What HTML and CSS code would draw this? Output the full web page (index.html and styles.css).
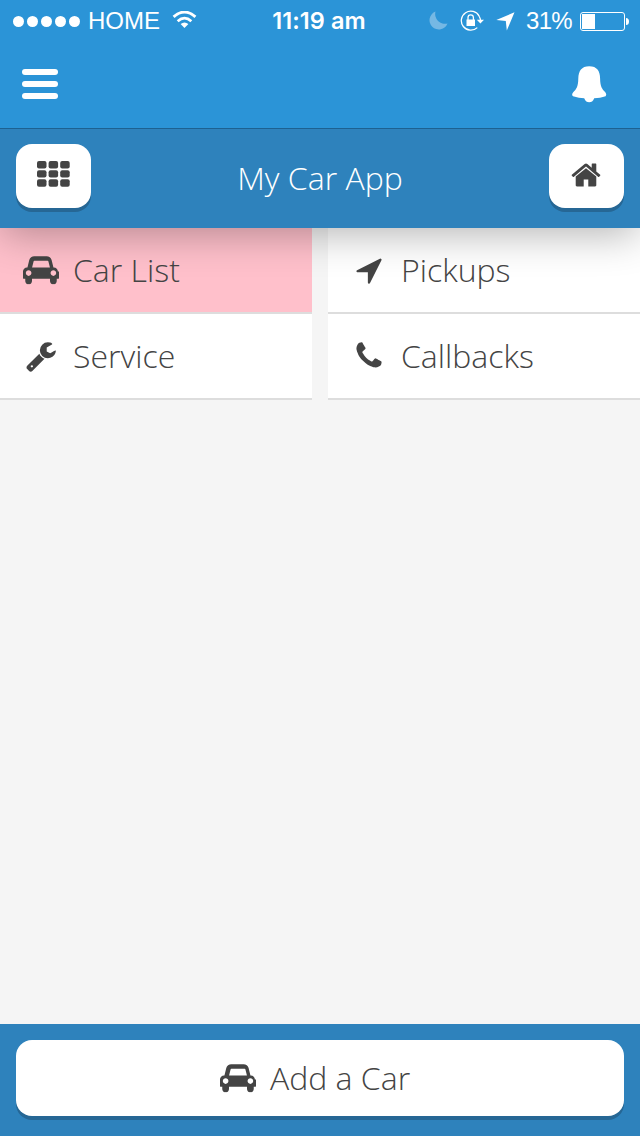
FILE: index.html
```html
<!DOCTYPE html>
<html lang="en">
<head>
<meta charset="utf-8">
<title>My Car App</title>
<link rel="stylesheet" href="styles.css">
</head>
<body>
<svg class="defs" aria-hidden="true">
  <symbol id="car" viewBox="0 128 2048 1600"><path d="M480 1088q0-66-47-113t-113-47-113 47-47 113 47 113 113 47 113-47 47-113zm36-320h1016l-89-357q-2-8-14-17.500t-21-9.500h-768q-9 0-21 9.500t-14 17.500zm1372 320q0-66-47-113t-113-47-113 47-47 113 47 113 113 47 113-47 47-113zm160-96v384q0 14-9 23t-23 9h-96v128q0 80-56 136t-136 56-136-56-56-136v-128h-1024v128q0 80-56 136t-136 56-136-56-56-136v-128h-96q-14 0-23-9t-9-23v-384q0-93 65.500-158.500t158.500-65.500h28l105-419q23-94 104-157.500t179-63.500h704q98 0 179 63.500t104 157.500l105 419h28q93 0 158.500 65.500t65.500 158.500z"/></symbol>
</svg>
<div class="screen">
  <header class="navbar">
    <div class="status">
      <div class="status-left">
        <span class="signal"><i></i><i></i><i></i><i></i><i></i></span>
        <span class="carrier">HOME</span>
        <svg class="wifi" width="25" height="19" viewBox="0 0 26 20"><path d="M1.500 6.200Q13-4 24.500 6.200" fill="none" stroke="#fff" stroke-width="3"/><path d="M5.800 10.700Q13 4.300 20.200 10.700" fill="none" stroke="#fff" stroke-width="2.900"/><path d="M8.900 13.800Q13 10.400 17.100 13.800L13 18Z" fill="#fff"/></svg>
      </div>
      <div class="clock">11:19 am</div>
      <div class="status-right">
        <svg class="moon" width="19" height="19" viewBox="0 0 19 19"><path d="M6.500.5A9.300 9.300 0 1 0 18.500 12.500A9.800 9.800 0 0 1 6.500.5Z" fill="#75b8e4"/></svg>
        <svg class="lock" width="24" height="22" viewBox="0 0 24 22"><path d="M19.200 6.200A9.500 9.500 0 1 0 17.300 17.600M19.200 6.200Q20.500 8.500 20.500 11" fill="none" stroke="#fff" stroke-width="1.300"/><path d="M16.800 9.700H24L20.400 13.500ZM6.500 9.500H15V16H6.500Z" fill="#fff"/><path d="M8 10V7.500a2.700 2.700 0 0 1 5.400 0V10" fill="none" stroke="#fff" stroke-width="1.300"/></svg>
        <svg class="gps" width="19" height="19" viewBox="0 0 19 19"><path d="M18.500.3L10.800 18.500L9.800 8.900L.3 8Z" fill="#fff"/></svg>
        <span class="percent">31%</span>
        <svg class="battery" width="49" height="19" viewBox="0 0 49 19"><rect x=".5" y=".5" width="44" height="18" rx="2.500" fill="none" stroke="#fff"/><path d="M2 2h13v15H2ZM46 6q3 0 3 3.500T46 13Z" fill="#fff"/></svg>
      </div>
    </div>
    <div class="nav-actions">
      <span class="menu"><i></i><i></i><i></i></span>
      <svg class="bell" width="35" height="37" viewBox="0 0 35 37"><path d="M17.200.2C9.500.2 6.500 5 6.300 12.500C6.200 20.500 4.500 23 1.200 26.300Q-.8 28.500 1 30.300C5 31.500 9 32.200 12.200 32.300C13.500 35.500 15 36.200 17.200 36.200S21 35.500 22.200 32.300C26 32.200 30 31.500 33.600 30.300Q35 28.500 33.300 26.300C30 23 28.200 20.500 28.100 12.500C28 5 25 .2 17.200.2Z" fill="#fff"/></svg>
    </div>
  </header>
  <div class="titlebar">
    <button class="button square" aria-label="Grid">
      <svg width="33" height="26" viewBox="0 0 33 26"><g><rect width="9.500" height="7.400" rx="2"/><rect x="11.600" width="9.500" height="7.400" rx="2"/><rect x="23.200" width="9.500" height="7.400" rx="2"/><rect y="9.200" width="9.500" height="7.400" rx="2"/><rect x="11.600" y="9.200" width="9.500" height="7.400" rx="2"/><rect x="23.200" y="9.200" width="9.500" height="7.400" rx="2"/><rect y="18.300" width="9.500" height="7.400" rx="2"/><rect x="11.600" y="18.300" width="9.500" height="7.400" rx="2"/><rect x="23.200" y="18.300" width="9.500" height="7.400" rx="2"/></g></svg>
    </button>
    <h1>My Car App</h1>
    <button class="button square" aria-label="Home">
      <svg class="home" width="32" height="32" viewBox="0 0 1792 1792"><path d="M1472 992v480q0 26-19 45t-45 19h-384v-384h-256v384h-384q-26 0-45-19t-19-45v-480q0-1 .5-3t.5-3l575-474 575 474q1 2 1 6zm223-69l-62 74q-8 9-21 11h-3q-13 0-21-7l-692-577-692 577q-12 8-24 7-13-2-21-11l-62-74q-8-10-7-23.500t11-21.500l719-599q32-26 76-26t76 26l244 204v-195q0-14 9-23t23-9h192q14 0 23 9t9 23v408l219 182q10 8 11 21.500t-7 23.500z"/></svg>
    </button>
  </div>
  <main class="content">
    <nav class="grid">
      <a class="item active"><span class="icon"><svg class="car" width="36" height="28.600"><use href="#car"/></svg></span><span class="label">Car List</span></a>
      <a class="item"><span class="icon"><svg width="32" height="32" viewBox="0 0 1792 1792"><path d="M1593 349l-640 1280q-17 35-57 35-5 0-15-2-22-5-35.500-22.500t-13.500-39.500v-576h-576q-22 0-39.500-13.500t-22.500-35.500 4-42 29-30l1280-640q13-7 29-7 27 0 45 19 15 14 18.500 34.500t-6.500 39.500z"/></svg></span><span class="label">Pickups</span></a>
      <a class="item"><span class="icon"><svg width="32" height="32" viewBox="0 0 1792 1792"><path d="M448 1472q0-26-19-45t-45-19-45 19-19 45 19 45 45 19 45-19 19-45zm644-420l-682 682q-37 37-90 37-52 0-91-37l-106-108q-38-36-38-90 0-53 38-91l681-681q39 98 114.500 173.500t173.500 114.500zm634-435q0 39-23 106-47 134-164.500 217.500t-258.500 83.500q-185 0-316.500-131.500t-131.500-316.500 131.500-316.500 316.500-131.500q58 0 121.500 16.500t107.500 46.500q16 11 16 28t-16 28l-293 169v224l193 107q5-3 79-48.500t135.500-81 70.500-35.500q15 0 23.500 10t8.500 25z"/></svg></span><span class="label">Service</span></a>
      <a class="item"><span class="icon"><svg width="32" height="32" viewBox="0 0 1792 1792"><path d="M1600 1240q0 27-10 70.500t-21 68.500q-21 50-122 106-94 51-186 51-27 0-52.500-3.500t-57.500-12.500-47.500-14.500-55.500-20.500-49-18q-98-35-175-83-128-79-264.500-215.500t-215.500-264.500q-48-77-83-175-3-9-18-49t-20.500-55.500-14.500-47.500-12.500-57.500-3.500-52.500q0-92 51-186 56-101 106-122 25-11 68.500-21t70.500-10q14 0 21 3 18 6 53 76 11 19 30 54t35 63.500 31 53.500q3 4 17.500 25t21.500 35.500 7 28.500q0 20-28.500 50t-62 55-62 53-28.500 46q0 9 5 22.500t8.500 20.500 14 24 11.500 19q76 137 174 235t235 174q2 1 19 11.500t24 14 20.500 8.500 22.500 5q18 0 46-28.500t53-62 55-62 50-28.500q14 0 28.500 7t35.500 21.500 25 17.500q25 15 53.500 31t63.500 35 54 30q70 35 76 53 3 7 3 21z"/></svg></span><span class="label">Callbacks</span></a>
    </nav>
  </main>
  <footer class="footer">
    <button class="button wide"><svg class="car" width="36" height="28.600"><use href="#car"/></svg><span class="label">Add a Car</span></button>
  </footer>
</div>
</body>
</html>
```
FILE: styles.css
```css
* { box-sizing: border-box; }
body {
  margin: 0;
  font-family: "Open Sans", sans-serif;
  font-weight: 300;
  font-size: 32px;
  color: #444;
}
svg { display: block; flex: none; fill: #444; }
.defs { display: none; }
.screen {
  display: flex;
  flex-direction: column;
  height: 1136px;
  background: #f5f5f5;
}

.navbar {
  position: relative;
  z-index: 2;
  height: 129px;
  background: #2b94d7;
  border-bottom: 1px solid #1d6191;
}
.status {
  display: grid;
  grid-template-columns: 1fr auto 1fr;
  height: 41px;
  padding: 0 11px 0 13px;
  font: 400 24px/41px "Liberation Sans", sans-serif;
  color: #fff;
}
.status-left, .status-right { display: flex; align-items: center; }
.status-right { justify-content: flex-end; margin-right: 0; }
.signal { display: flex; gap: 3px; margin-right: 8px; }
.signal i { width: 11px; height: 11px; border-radius: 50%; background: #fff; }
.carrier { width: 84px; padding-bottom: 1px; }
.wifi { margin-bottom: 1px; }
.clock {
  margin-right: 4px;
  font: 600 23.500px/42px Inter, "Liberation Sans", sans-serif;
  letter-spacing: .1px;
}
.moon { margin: 0 12px 1px 0; }
.lock { margin: 0 12px 1px 0; }
.gps { margin-right: 11px; }
.percent { letter-spacing: -.7px; margin-right: 8px; padding-bottom: 1px; }
.nav-actions {
  display: flex;
  justify-content: space-between;
  align-items: center;
  height: 86px;
  padding: 0 33px 0 22px;
}
.menu { display: grid; gap: 6px; }
.menu i { width: 36px; height: 6px; border-radius: 3px; background: #fff; }
.bell { margin-top: 1px; }

.titlebar {
  position: relative;
  z-index: 1;
  display: flex;
  justify-content: space-between;
  align-items: flex-start;
  height: 99px;
  padding: 15px 16px 0;
  background: #2e82bc;
  box-shadow: 0 8px 40px -2px rgba(0, 0, 0, .3);
}
h1 { margin: 0; font-size: 32px; font-weight: 300; line-height: 68px; color: #fff; }
.button {
  display: flex;
  justify-content: center;
  align-items: center;
  border: 0;
  border-radius: 16px;
  background: #fff;
  box-shadow: 0 4px 0 #266795;
  font: inherit;
  color: #444;
}
.square { width: 75px; height: 64px; padding: 0 0 4px; }
.home { margin-top: 1px; }

.content { flex: 1; }
.grid { display: grid; grid-template-columns: 312px 312px; column-gap: 16px; }
.item {
  display: flex;
  align-items: center;
  height: 86px;
  padding-left: 20px;
  border-bottom: 2px solid #ddd;
  background: #fff;
}
.active { background: #ffc0cb; }
.icon { display: flex; justify-content: center; width: 41px; margin-right: 12px; }
.car { margin-top: 1px; }
.label { padding-bottom: 2px; }

.footer { height: 112px; padding: 16px; background: #2e82bc; }
.wide { width: 100%; height: 76px; gap: 14px; padding: 0 10px 0 0; }
```
